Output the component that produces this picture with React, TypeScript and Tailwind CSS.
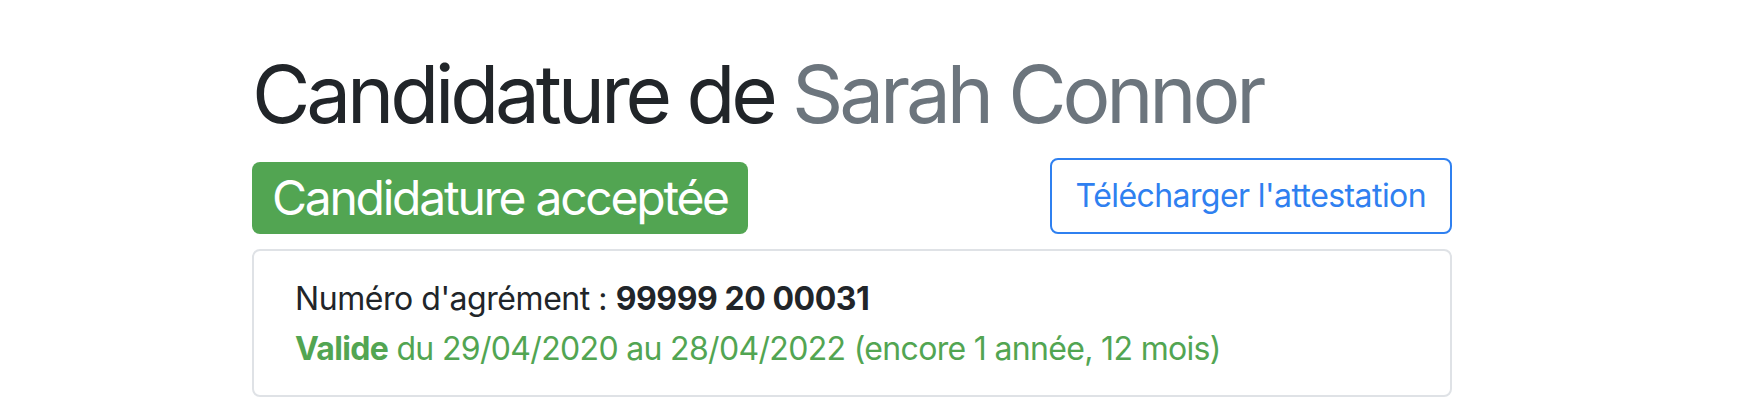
export default function App() {
  return (
    <div className="min-h-[416px] w-full bg-white font-['Inter','Noto_Sans',sans-serif] text-[#212529]">
      <div className="ml-[252px] w-[1200px] pt-[46px]">
        <h1 className="text-[80px] leading-[96px] font-normal tracking-[-0.052em] mb-[16px]">
          Candidature de <span className="text-[#6c757d]">Sarah Connor</span>
        </h1>
        <div className="flex items-end justify-between">
          <span className="inline-block rounded-[8px] bg-[#52a552] pl-[20px] pr-[20px] py-[12px] text-[48px] leading-[48px] tracking-[-0.047em] text-white">
            Candidature acceptée
          </span>
          <button className="rounded-[8px] border-2 border-[#2f80f0] px-[24px] py-[12px] text-[32px] leading-[48px] tracking-[-0.018em] text-[#2f80f0]">
            Télécharger l'attestation
          </button>
        </div>
        <div className="mt-[15px] rounded-[8px] border-2 border-[#dfe2e6] px-[41px] pt-[23px] pb-[21px] text-[32px] leading-[50px]">
          <p className="tracking-[-0.014em]">
            Numéro d'agrément : <strong className="font-bold">99999 20 00031</strong>
          </p>
          <p className="tracking-[-0.021em] text-[#52a552]">
            <strong className="font-bold">Valide</strong> du 29/04/2020 au 28/04/2022 (encore 1 année, 12 mois)
          </p>
        </div>
      </div>
    </div>
  );
}
